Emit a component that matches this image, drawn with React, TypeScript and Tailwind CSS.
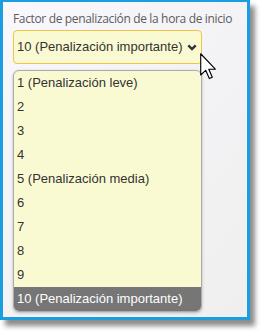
import { useState } from 'react';

const options = [
  '1 (Penalización leve)',
  '2',
  '3',
  '4',
  '5 (Penalización media)',
  '6',
  '7',
  '8',
  '9',
  '10 (Penalización importante)',
];

function Cursor() {
  return (
    <svg
      className="absolute left-[197px] top-[51px]"
      width="17"
      height="27"
      viewBox="0 0 12 19"
    >
      <path
        d="M0.5 0.5 L0.5 15.5 L4 12.2 L6.6 18 L8.7 17.1 L6.2 11.4 L10.8 11.4 Z"
        fill="#ffffff"
        stroke="#000000"
        strokeWidth="0.8"
        strokeLinejoin="round"
      />
    </svg>
  );
}

export default function App() {
  const [selected] = useState(9);

  return (
    <div className="w-[263px] h-[333px] bg-white">
      <div className="relative w-[250px] h-[320px] border-[#1a9ee0] border-t-2 border-l-[3px] border-r-[3px] border-b-[3px] bg-gradient-to-br from-[#f8f8fd] to-[#efefef] shadow-[5px_6px_5px_rgba(0,0,0,0.45)] pt-[9px] pl-[10px]">
        <div className="text-[12px] leading-4 text-[#5c5c5c] tracking-[-0.35px] font-['Open_Sans',sans-serif] whitespace-nowrap">
          Factor de penalización de la hora de inicio
        </div>

        <div className="mt-[3px] w-[189px] h-[34px] flex items-center justify-between pl-[3px] pr-[4px] bg-[#fafad2] border border-[#f2c441] rounded-[4px] font-['Liberation_Sans',Arial,sans-serif] text-[13px] text-[#333]">
          <span>{options[selected]}</span>
          <svg width="10" height="7" viewBox="0 0 10 7">
            <path d="M1.3 1.3 L5 5 L8.7 1.3" fill="none" stroke="#333" strokeWidth="2.4" />
          </svg>
        </div>

        <div className="mt-[6px] w-[189px] flex flex-col bg-[#fafad2] border border-[#ababab] rounded-[6px] overflow-hidden shadow-[0_1px_3px_rgba(0,0,0,0.25)] font-['Liberation_Sans',Arial,sans-serif] text-[13px]">
          {options.map((o, i) => (
            <div
              key={o}
              className={
                i === selected
                  ? 'h-6 flex items-center pl-[3px] bg-[#767676] text-white'
                  : 'h-6 flex items-center pl-[3px] text-[#333]'
              }
            >
              {o}
            </div>
          ))}
        </div>

        <Cursor />
      </div>
    </div>
  );
}
